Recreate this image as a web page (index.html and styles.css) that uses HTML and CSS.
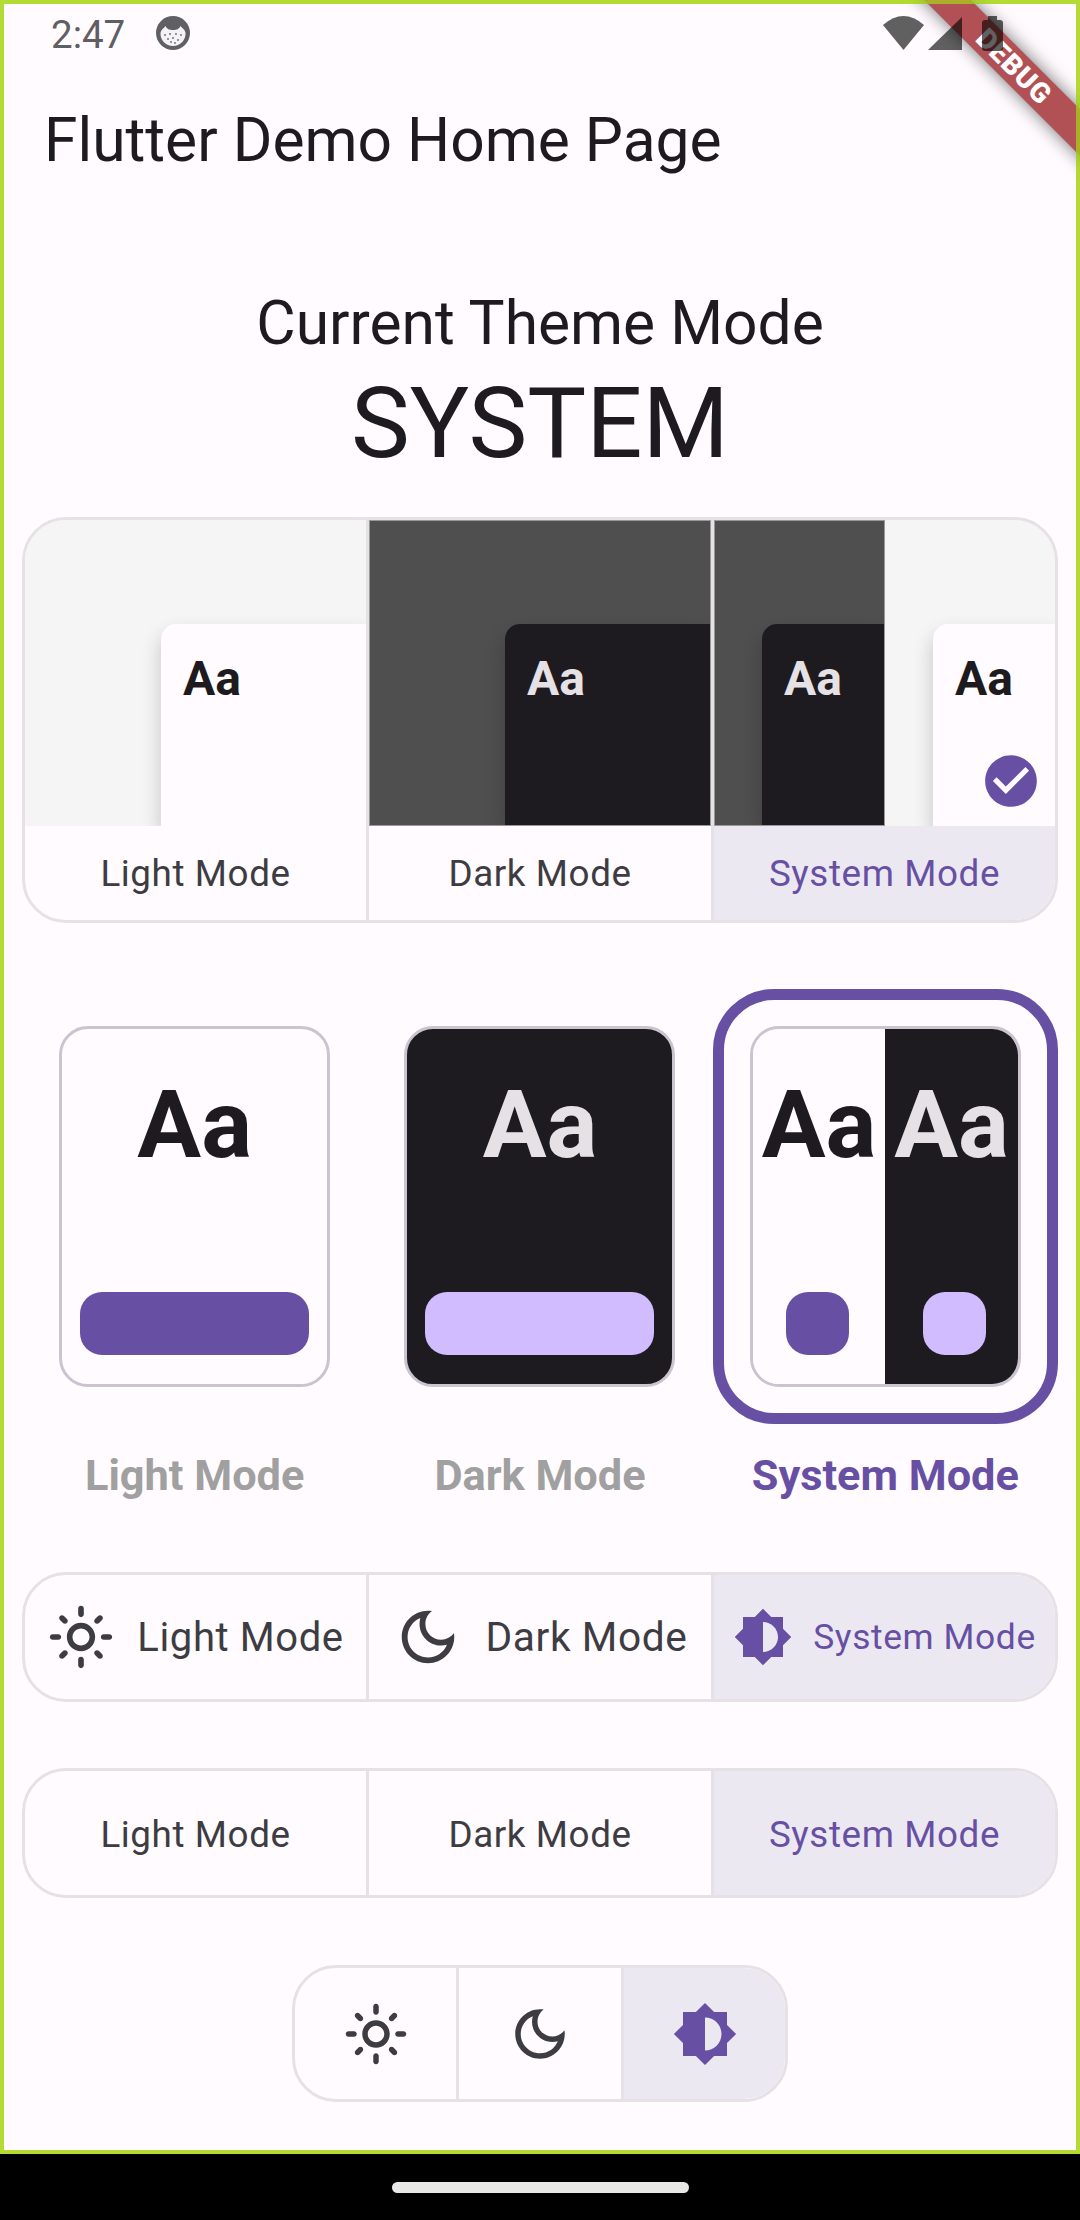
FILE: index.html
```html
<!DOCTYPE html>
<html lang="en">
<head>
<meta charset="utf-8">
<title>Flutter Demo Home Page</title>
<link rel="stylesheet" href="styles.css">
</head>
<body>
<svg class="defs" width="0" height="0" aria-hidden="true">
  <symbol id="i-sun" viewBox="0 0 24 24"><path d="M12 9c1.65 0 3 1.35 3 3s-1.35 3-3 3-3-1.35-3-3 1.35-3 3-3m0-2c-2.76 0-5 2.24-5 5s2.24 5 5 5 5-2.24 5-5-2.24-5-5-5zM2 13h2c.55 0 1-.45 1-1s-.45-1-1-1H2c-.55 0-1 .45-1 1s.45 1 1 1zm18 0h2c.55 0 1-.45 1-1s-.45-1-1-1h-2c-.55 0-1 .45-1 1s.45 1 1 1zM11 2v2c0 .55.45 1 1 1s1-.45 1-1V2c0-.55-.45-1-1-1s-1 .45-1 1zm0 18v2c0 .55.45 1 1 1s1-.45 1-1v-2c0-.55-.45-1-1-1s-1 .45-1 1zM5.99 4.58c-.39-.39-1.03-.39-1.41 0-.39.39-.39 1.03 0 1.41l1.06 1.06c.39.39 1.03.39 1.41 0s.39-1.03 0-1.41L5.99 4.58zm12.37 12.37c-.39-.39-1.03-.39-1.41 0-.39.39-.39 1.03 0 1.41l1.06 1.06c.39.39 1.03.39 1.41 0 .39-.39.39-1.03 0-1.41l-1.06-1.06zm1.06-10.96c.39-.39.39-1.03 0-1.41-.39-.39-1.03-.39-1.41 0l-1.06 1.06c-.39.39-.39 1.03 0 1.41s1.03.39 1.41 0l1.06-1.06zM7.05 18.36c.39-.39.39-1.03 0-1.41-.39-.39-1.03-.39-1.41 0l-1.06 1.06c-.39.39-.39 1.03 0 1.41s1.03.39 1.41 0l1.06-1.06z"/></symbol>
  <symbol id="i-moon" viewBox="0 0 24 24"><path d="M9.37 5.51c-.18.64-.27 1.31-.27 1.99 0 4.08 3.32 7.4 7.4 7.4.68 0 1.35-.09 1.99-.27C17.45 17.19 14.93 19 12 19c-3.86 0-7-3.14-7-7 0-2.93 1.81-5.45 4.37-6.49zM12 3c-4.97 0-9 4.03-9 9s4.03 9 9 9 9-4.03 9-9c0-.46-.04-.92-.1-1.36-.98 1.37-2.58 2.26-4.4 2.26-2.98 0-5.4-2.42-5.4-5.4 0-1.81.89-3.42 2.26-4.4-.44-.06-.9-.1-1.36-.1z"/></symbol>
  <symbol id="i-auto" viewBox="0 0 24 24"><path d="M20 15.31L23.31 12 20 8.69V4h-4.69L12 .69 8.69 4H4v4.69L.69 12 4 15.31V20h4.69L12 23.31 15.31 20H20v-4.69zM12 18V6c3.31 0 6 2.69 6 6s-2.69 6-6 6z"/></symbol>
</svg>

<div class="phone">
  <div class="screen">
    <div class="statusbar">
      <span class="clock">2:47</span>
      <svg class="face" viewBox="0 0 34 34">
        <circle cx="17" cy="17" r="17" fill="#606064"/>
        <path fill="#f4f2f4" d="M4.5 17C5 13.5 8 12 9.5 10 11 13 13 14 17 14s6-1 7.5-4c1.5 2 4.5 3.5 5 7 .5 7-5.500 13-12.500 13S4 24 4.500 17z"/>
        <g fill="#77757a"><circle cx="9" cy="19" r="1"/><circle cx="14" cy="18" r="1"/><circle cx="20" cy="18" r="1"/><circle cx="25" cy="19" r="1"/><circle cx="12" cy="23" r="1"/><circle cx="17" cy="22" r="1"/><circle cx="22" cy="24" r="1"/><circle cx="15" cy="26" r="1"/><circle cx="19" cy="27" r="1"/></g>
      </svg>
      <div class="sysicons">
        <svg class="wifi" viewBox="0 0 41 34"><path d="M20.5 34 0 9Q20.500 -9 41 9Z"/></svg>
        <svg class="signal" viewBox="0 0 34 33"><path d="M0 33 34 0V33Z"/></svg>
        <svg class="battery" viewBox="0 0 21 35"><path d="M6 0H15V4H18Q21 4 21 7V32Q21 35 18 35H3Q0 35 0 32V7Q0 4 3 4H6Z"/></svg>
      </div>
    </div>

    <h1 class="appbar">Flutter Demo Home Page</h1>

    <div class="heading">
      <div class="heading-sub">Current Theme Mode</div>
      <div class="heading-main">SYSTEM</div>
    </div>

    <div class="segmented seg-preview">
      <div class="cell">
        <div class="preview tone-light"><div class="mini mini-light">Aa</div></div>
        <div class="cell-label">Light Mode</div>
      </div>
      <div class="cell">
        <div class="preview tone-dark"><div class="mini mini-dark">Aa</div></div>
        <div class="cell-label">Dark Mode</div>
      </div>
      <div class="cell is-on">
        <div class="preview-split">
          <div class="preview half tone-dark"><div class="mini mini-dark">Aa</div></div>
          <div class="preview half tone-light"><div class="mini mini-light">Aa</div></div>
          <svg class="check" viewBox="0 0 24 24"><path d="M12 2C6.48 2 2 6.48 2 12s4.48 10 10 10 10-4.48 10-10S17.52 2 12 2zm-2 15l-5-5 1.41-1.41L10 14.17l7.59-7.59L19 8l-9 9z"/></svg>
        </div>
        <div class="cell-label">System Mode</div>
      </div>
    </div>

    <div class="options">
      <div class="option">
        <div class="ring">
          <div class="card card-light">
            <div class="card-pane"><div class="card-aa">Aa</div><div class="card-btn"></div></div>
          </div>
        </div>
        <div class="option-label">Light Mode</div>
      </div>
      <div class="option">
        <div class="ring">
          <div class="card card-dark">
            <div class="card-pane"><div class="card-aa">Aa</div><div class="card-btn"></div></div>
          </div>
        </div>
        <div class="option-label">Dark Mode</div>
      </div>
      <div class="option is-on">
        <div class="ring">
          <div class="card card-split">
            <div class="card-pane pane-light"><div class="card-aa">Aa</div><div class="card-btn"></div></div>
            <div class="card-pane pane-dark"><div class="card-aa">Aa</div><div class="card-btn"></div></div>
          </div>
        </div>
        <div class="option-label">System Mode</div>
      </div>
    </div>

    <div class="segmented seg-row seg-icons-text">
      <div class="cell">
        <svg class="ico ico-sun-lg"><use href="#i-sun"/></svg>
        <span class="fit fit-light">Light Mode</span>
      </div>
      <div class="cell">
        <svg class="ico ico-moon-lg"><use href="#i-moon"/></svg>
        <span class="fit fit-dark">Dark Mode</span>
      </div>
      <div class="cell is-on">
        <svg class="ico ico-auto-sm"><use href="#i-auto"/></svg>
        <span class="fit fit-system">System Mode</span>
      </div>
    </div>

    <div class="segmented seg-row seg-text">
      <div class="cell"><span class="cell-text">Light Mode</span></div>
      <div class="cell"><span class="cell-text">Dark Mode</span></div>
      <div class="cell is-on"><span class="cell-text">System Mode</span></div>
    </div>

    <div class="segmented seg-row seg-icons">
      <div class="cell"><svg class="ico"><use href="#i-sun"/></svg></div>
      <div class="cell"><svg class="ico"><use href="#i-moon"/></svg></div>
      <div class="cell is-on"><svg class="ico"><use href="#i-auto"/></svg></div>
    </div>
  </div>

  <div class="navbar"><div class="handle"></div></div>

  <div class="banner"><span class="banner-text">DEBUG</span></div>
  <div class="frame-tint"></div>
</div>
</body>
</html>
```
FILE: styles.css
```css
* { box-sizing: border-box; }
html, body { margin: 0; padding: 0; }
body { font-family: Roboto, "Liberation Sans", sans-serif; background: #000; }
.defs { position: absolute; }

.phone {
  position: relative;
  width: 1080px;
  height: 2220px;
  overflow: hidden;
  display: flex;
  flex-direction: column;
}
.screen {
  height: 2154px;
  border: 4px solid #b2dc33;
  background: #fffbfe;
  display: flex;
  flex-direction: column;
  align-items: center;
  color: #1d1b20;
}
.navbar {
  flex: 1;
  background: #000;
  display: flex;
  align-items: center;
  justify-content: center;
}
.handle { width: 297px; height: 11px; border-radius: 6px; background: #e8e9e7; }

/* status bar */
.statusbar {
  align-self: stretch;
  height: 58px;
  display: flex;
  align-items: center;
  padding: 0 73px 0 47px;
  flex-shrink: 0;
}
.clock { font-size: 38.5px; line-height: 46px; padding-top: 4px; color: #5f5e62; }
.face { width: 34px; height: 34px; margin-left: 31px; }
.sysicons { position: relative; z-index: 3; margin-left: auto; display: flex; align-items: center; }
.sysicons svg { fill: rgba(0, 0, 0, .62); display: block; }
.wifi { width: 41px; height: 34px; }
.signal { width: 34px; height: 33px; margin-left: 4px; }
.battery { width: 21px; height: 35px; margin-left: 20px; }

/* app bar + heading */
.appbar {
  align-self: stretch;
  margin: 37px 0 0;
  padding-left: 40px;
  font-size: 60.5px;
  font-weight: 400;
  line-height: 84px;
  flex-shrink: 0;
}
.heading { margin-top: 101px; text-align: center; flex-shrink: 0; }
.heading-sub { font-size: 60.5px; line-height: 80px; }
.heading-main { font-size: 99px; line-height: 116px; margin-top: 1px; }

/* segmented controls */
.segmented {
  display: grid;
  grid-template-columns: 344px 345px 341px;
  width: 1036px;
  border: 3px solid #e5e1e5;
  border-radius: 44px;
  overflow: hidden;
  background: #fffbfe;
  flex-shrink: 0;
}
.cell { border-right: 3px solid #e5e1e5; color: #3d3c42; fill: #3d3c42; min-width: 0; }
.cell:last-child { border-right: 0; }
.cell.is-on { background: #ece8f2; color: #6750a4; fill: #6750a4; }

.seg-preview { margin-top: 36px; }
.cell-label, .cell-text { font-size: 36.8px; letter-spacing: .6px; }
.cell-label { height: 94px; line-height: 96px; text-align: center; }
.cell-text { padding-top: 2px; }

.preview {
  height: 306px;
  display: flex;
  padding: 104px 0 0 136px;
  overflow: hidden;
}
.preview.half { flex: 1 1 0; min-width: 0; padding-left: 48px; }
.preview-split { position: relative; display: flex; }
.tone-light { background: #f4f5f4; }
.tone-dark { background: #4f4f4f; border: 1px solid #999; padding: 103px 0 0 135px; }
.preview.half.tone-dark { padding-left: 47px; }
.mini {
  flex: 1 0 auto;
  border-radius: 15px 0 0 0;
  padding: 27px 0 0 22px;
  font-size: 48px;
  font-weight: 700;
  line-height: 56px;
  box-shadow: 0 10px 20px rgba(0, 0, 0, .2);
}
.mini-light { background: #fffbfe; color: #1d1b20; }
.mini-dark { background: #1d1b20; color: #e6e1e5; }
.check { position: absolute; right: 13px; bottom: 14px; width: 62px; height: 62px; fill: #6750a4; }

.seg-row .cell { display: flex; align-items: center; justify-content: center; }
.seg-row { height: 130px; }
.seg-icons-text { margin-top: 70px; }
.seg-text { margin-top: 66px; }
.seg-icons {
  margin-top: 67px;
  width: 496px;
  height: 137px;
  grid-template-columns: 164px 165px 161px;
}
.ico { width: 66px; height: 66px; display: block; }
.ico-sun-lg { width: 68px; height: 68px; margin-right: 22px; }
.ico-moon-lg { width: 70px; height: 70px; margin-right: 23px; }
.ico-auto-sm { width: 60px; height: 60px; margin-right: 20px; }
.fit { letter-spacing: .6px; white-space: nowrap; }
.fit-light { font-size: 40px; }
.fit-dark { font-size: 40.7px; }
.fit-system { font-size: 35.4px; }

/* theme option cards */
.options {
  margin-top: 66px;
  width: 1036px;
  display: grid;
  grid-template-columns: repeat(3, 1fr);
  flex-shrink: 0;
}
.option { display: flex; flex-direction: column; align-items: center; }
.ring {
  width: 345px;
  height: 435px;
  border: 11px solid transparent;
  border-radius: 61px;
  display: flex;
  align-items: center;
  justify-content: center;
}
.is-on .ring { border-color: #6750a4; }
.card {
  width: 271px;
  height: 361px;
  border: 3px solid #cac4d0;
  border-radius: 29px;
  overflow: hidden;
  display: flex;
}
.card-pane {
  flex: 1 1 0;
  min-width: 0;
  display: flex;
  flex-direction: column;
  align-items: center;
  padding: 40px 18px 29px;
}
.card-aa { font-size: 95px; font-weight: 700; line-height: 112px; }
.card-btn { margin-top: auto; align-self: stretch; height: 63px; border-radius: 22px; }
.card-light, .pane-light { background: #fffbfe; }
.card-dark, .pane-dark { background: #1d1b20; }
.card-light .card-aa, .pane-light .card-aa { color: #1d1b20; }
.card-dark .card-aa, .pane-dark .card-aa { color: #e6e1e5; }
.card-light .card-btn, .pane-light .card-btn { background: #6750a4; }
.card-dark .card-btn, .pane-dark .card-btn { background: #d0bcff; }
.card-split .card-pane { padding-left: 0; padding-right: 0; }
.card-split .card-btn { align-self: center; width: 63px; }
.card-split .pane-light .card-btn { margin-right: 4px; }
.card-split .pane-dark .card-btn { margin-left: 5px; }
.option-label {
  margin-top: 26px;
  font-size: 43.3px;
  font-weight: 700;
  line-height: 52px;
  color: #a0a0a0;
}
.option.is-on .option-label { color: #6750a4; }

/* debug ribbon and tinted frame lie over the page */
.banner {
  position: absolute;
  z-index: 2;
  left: 864px;
  top: 50px;
  width: 300px;
  height: 33px;
  transform: rotate(45deg);
  background: rgba(142, 0, 5, .68);
  box-shadow: 0 0 18px rgba(0, 0, 0, .55);
  display: flex;
  align-items: center;
  justify-content: center;
}
.banner-text {
  color: #fff;
  font-size: 28px;
  font-weight: 900;
  line-height: 33px;
  letter-spacing: .8px;
}
.frame-tint {
  position: absolute;
  z-index: 2;
  left: 0;
  top: 0;
  width: 1080px;
  height: 2154px;
  border: 4px solid rgba(178, 220, 51, .7);
  pointer-events: none;
}
```
